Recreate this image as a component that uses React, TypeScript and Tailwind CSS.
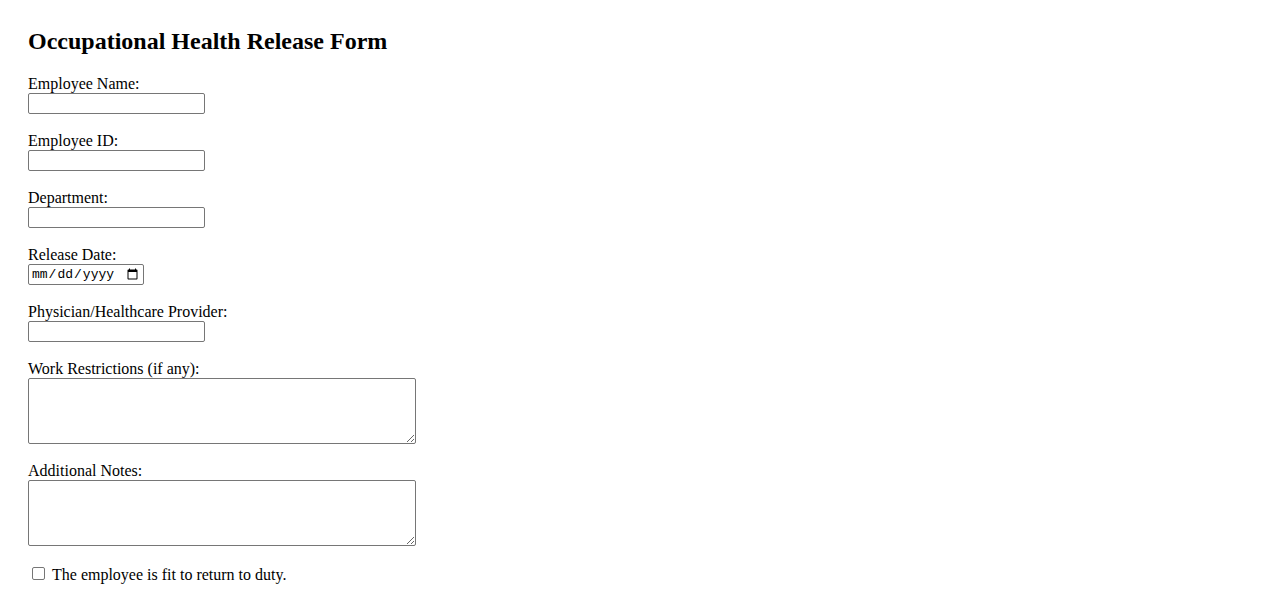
import React from "react";

const inputCls =
  "block w-[177px] h-[21px] border border-[#767676] rounded-[2px] px-[2px] py-[1px] bg-white text-[13.33px] outline-none";

function Field({ label }: { label: string }) {
  return (
    <div className="mb-[18px]">
      <label className="block leading-[18px]">{label}</label>
      <input type="text" className={inputCls} style={{ fontFamily: "'Liberation Sans', Arial, sans-serif" }} />
    </div>
  );
}

function Area({ label }: { label: string }) {
  return (
    <div className="mb-[18px]">
      <label className="block leading-[18px]">{label}</label>
      <textarea
        className="block w-[388px] h-[66px] border border-[#767676] rounded-[2px] p-[2px] bg-white text-[13.33px] outline-none resize"
        style={{ fontFamily: "'Liberation Mono', monospace" }}
      />
    </div>
  );
}

export default function App() {
  return (
    <div
      className="min-h-screen bg-white text-black pt-[27px] pl-[28px] text-[16px]"
      style={{ fontFamily: "'Liberation Serif', 'Times New Roman', serif" }}
    >
      <h2 className="text-[24px] font-bold leading-[28px] mb-[20px]">Occupational Health Release Form</h2>
      <form>
        <Field label="Employee Name:" />
        <Field label="Employee ID:" />
        <Field label="Department:" />
        <div className="mb-[18px]">
          <label className="block leading-[18px]">Release Date:</label>
          <input
            type="date"
            className="block w-[116px] h-[21px] border border-[#767676] rounded-[2px] px-[2px] py-0 bg-white text-[13px] text-black outline-none"
            style={{ fontFamily: "'Liberation Mono', monospace" }}
          />
        </div>
        <Field label="Physician/Healthcare Provider:" />
        <Area label="Work Restrictions (if any):" />
        <Area label="Additional Notes:" />
        <div className="flex items-start leading-[18px] h-[22px]">
          <input
            type="checkbox"
            className="w-[13px] h-[13px] ml-[4px] mr-[3px] mt-[3px] appearance-none border border-[#767676] rounded-[2px] bg-white"
          />
          <label className="ml-[4px] mt-[2px]">The employee is fit to return to duty.</label>
        </div>
      </form>
    </div>
  );
}
